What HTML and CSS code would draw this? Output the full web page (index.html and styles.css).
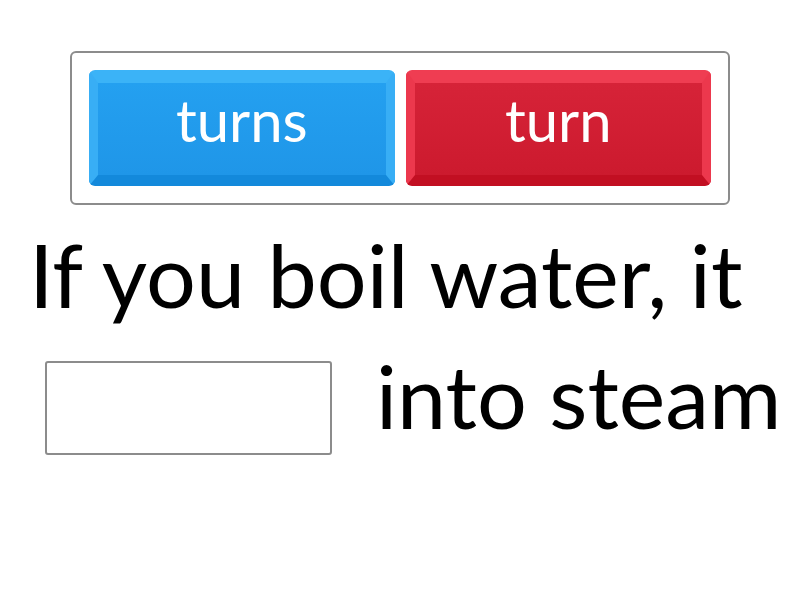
FILE: index.html
```html
<!DOCTYPE html>
<html lang="en">
<head>
<meta charset="utf-8">
<title>Quiz</title>
<link rel="stylesheet" href="styles.css">
</head>
<body>
<div class="page">
  <div class="options">
    <div class="btn btn-blue">turns</div>
    <div class="btn btn-red">turn</div>
  </div>
  <div class="sentence">
    <div class="line line1">If you boil water, it</div>
    <div class="line line2"><span class="blank"></span><span class="rest">into steam</span></div>
  </div>
</div>
</body>
</html>
```
FILE: styles.css
```css
html, body {
  margin: 0;
  padding: 0;
  background: #ffffff;
}
.page {
  width: 800px;
  height: 600px;
  font-family: "Lato", "Open Sans", sans-serif;
  color: #000;
  padding-top: 51px;
  box-sizing: border-box;
}
.options {
  margin-left: 70px;
  width: 660px;
  height: 154px;
  box-sizing: border-box;
  border: 2px solid #8c8c8c;
  border-radius: 6px;
  padding: 17px;
  display: flex;
  gap: 11px;
}
.btn {
  flex: 1;
  box-sizing: border-box;
  border-radius: 6px;
  border-style: solid;
  border-width: 13px 9px 11px 9px;
  color: #fff;
  font-size: 58px;
  line-height: 1;
  display: flex;
  align-items: center;
  justify-content: center;
  padding-bottom: 18px;
}
.btn-blue {
  border-color: #3bb3f7 #38aef5 #1389db #38aef5;
  background: linear-gradient(#24a0f0, #1f96e8);
}
.btn-red {
  border-color: #ef3d52 #ec384d #c20f22 #ec384d;
  background: linear-gradient(#d62338, #cc1a2e);
}
.sentence {
  font-size: 88px;
  line-height: 1;
}
.line {
  display: flex;
}
.line1 {
  margin-top: 23px;
  padding-left: 29px;
  height: 92px;
  align-items: center;
}
.line2 {
  margin-top: 41px;
  padding-left: 45px;
  gap: 44px;
  align-items: flex-start;
}
.blank {
  width: 287px;
  height: 94px;
  box-sizing: border-box;
  border: 2px solid #8c8c8c;
  border-radius: 3px;
}
.rest {
  margin-top: -10px;
}
```
